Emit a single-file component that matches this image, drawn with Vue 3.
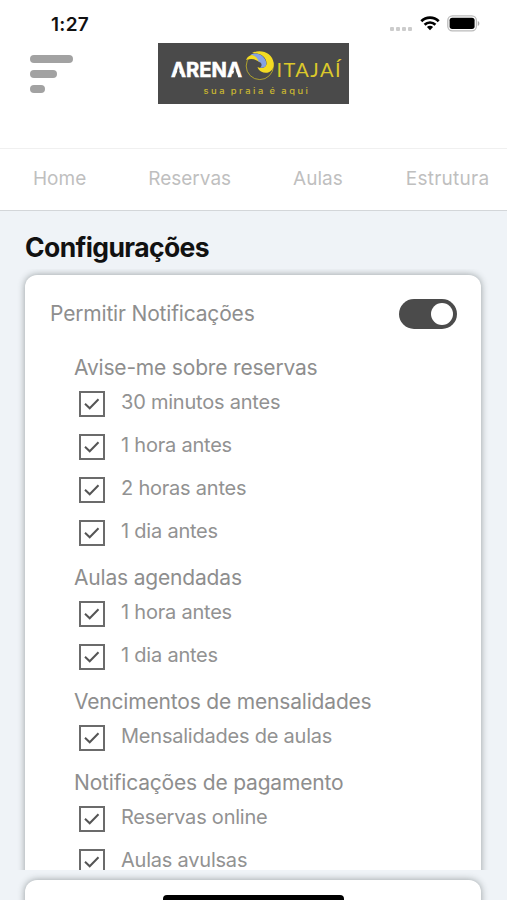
<script setup>
import { ref } from 'vue'

const tabs = ['Home', 'Reservas', 'Aulas', 'Estrutura']
const allowed = ref(true)
const groups = ref([
  {
    title: 'Avise-me sobre reservas',
    options: [
      { label: '30 minutos antes', on: true },
      { label: '1 hora antes', on: true },
      { label: '2 horas antes', on: true },
      { label: '1 dia antes', on: true },
    ],
  },
  {
    title: 'Aulas agendadas',
    options: [
      { label: '1 hora antes', on: true },
      { label: '1 dia antes', on: true },
    ],
  },
  {
    title: 'Vencimentos de mensalidades',
    options: [{ label: 'Mensalidades de aulas', on: true }],
  },
  {
    title: 'Notificações de pagamento',
    options: [
      { label: 'Reservas online', on: true },
      { label: 'Aulas avulsas', on: true },
    ],
  },
])
</script>

<template>
  <div class="screen">
    <header class="header">
      <div class="status">
        <span class="time">1:27</span>
        <div class="indicators">
          <div class="dots"><i v-for="n in 4" :key="n"></i></div>
          <svg class="wifi" width="20" height="16" viewBox="0 0 20 16">
            <path d="M10 15.2 6.9 12.1a4.4 4.4 0 0 1 6.2 0z" />
            <path class="arc" d="M4.6 9.7a7.7 7.7 0 0 1 10.8 0M1.3 6.2a12.4 12.4 0 0 1 17.4 0" />
          </svg>
          <svg class="battery" width="33" height="17" viewBox="0 0 33 17">
            <rect class="shell" x="0.8" y="0.8" width="28.6" height="15" rx="4.6" />
            <rect x="2.6" y="2.7" width="25" height="11.2" rx="2.6" />
            <path class="tip" d="M30.8 6v5c2.1-.8 2.1-4.2 0-5z" />
          </svg>
        </div>
      </div>
      <div class="brand-row">
        <button class="menu" aria-label="Menu"><i></i><i></i><i></i></button>
        <svg class="logo" width="191" height="61" viewBox="0 0 191 61">
          <rect class="plate" width="191" height="61" />
          <text class="arena" x="13" y="33.5" textLength="71" lengthAdjust="spacingAndGlyphs">ARENA</text>
          <path class="notch" d="M17.200 34.500 20.2 25 23.4 34.500z M74 34.500 77.1 25 80.2 34.500z" />
          <circle class="ring" cx="101.8" cy="23" r="13.6" />
          <path class="wave" d="M88 17C90 12 96 10.500 99.500 14c1.500 1.500 2.300 3.500 2.500 5.500-3.500-3-8-4.500-14-2.500z" />
          <path class="wave" d="M94 10C103 5.500 114.500 10 115.700 20c.6 8.500-6.700 12-12.700 8.500-2-1.200-3-2.800-3.500-4.500 3.500 2 8.500 1 9-3C109 14 102 9.500 94 10z" />
          <path class="water" d="M92.500 11.500C100 8.500 107.500 13.500 108.300 20c.3 4-3.300 5.500-6.300 4.500 2.500-1.500 2-5-1.500-6C99.500 14.500 96.500 12.500 92.500 11.500z" />
          <text class="itajai" x="118.500" y="33.500" textLength="64" lengthAdjust="spacing">ITAJAÍ</text>
          <text class="tagline" x="45.500" y="51" textLength="107" lengthAdjust="spacingAndGlyphs">sua praia é aqui</text>
        </svg>
      </div>
    </header>

    <nav class="tabs">
      <a v-for="tab in tabs" :key="tab">{{ tab }}</a>
    </nav>

    <main class="content">
      <h1>Configurações</h1>
      <div class="scroller">
        <section class="card">
          <div class="allow">
            <span>Permitir Notificações</span>
            <button class="switch" :class="{ on: allowed }" aria-label="Permitir Notificações" @click="allowed = !allowed"><i></i></button>
          </div>
          <div v-for="group in groups" :key="group.title" class="group">
            <h2>{{ group.title }}</h2>
            <div v-for="option in group.options" :key="option.label" class="option" @click="option.on = !option.on">
              <span class="box">
                <svg v-if="option.on" width="16" height="14" viewBox="0 0 16 14"><path d="M1 6.800 5.700 11.300 14.500 2.200" /></svg>
              </span>
              <span class="label">{{ option.label }}</span>
            </div>
          </div>
        </section>
      </div>
      <section class="card next"><div class="home-bar"></div></section>
    </main>
  </div>
</template>

<style>
body { background: #fff; }
</style>

<style scoped>
.screen {
  width: 507px;
  height: 900px;
  overflow: hidden;
  display: flex;
  flex-direction: column;
  font-family: Inter, "Liberation Sans", sans-serif;
  background: #fff;
}
button { border: 0; padding: 0; background: none; }
.header { height: 148px; flex: none; }
.status {
  height: 43px;
  display: flex;
  justify-content: space-between;
  padding: 0 27px 0 51px;
}
.time { font-size: 19px; font-weight: 600; line-height: 49px; letter-spacing: 0.3px; color: #111; }
.indicators { display: flex; align-items: flex-start; padding-top: 15px; }
.dots { display: flex; gap: 2px; padding-top: 12px; }
.dots i { width: 4px; height: 4px; border-radius: 1px; background: #ccc; }
.wifi { margin-left: 8px; }
.wifi .arc { fill: none; stroke: #000; stroke-width: 2.700; }
.battery { margin-left: 7px; }
.shell { fill: #fff; stroke: #bbb; stroke-width: 1.300; }
.tip { fill: #aaa; }
.brand-row { display: flex; padding-left: 30px; }
.menu { width: 43px; margin-right: 85px; padding-top: 12px; display: flex; flex-direction: column; gap: 7px; }
.menu i { height: 8px; border-radius: 4px; background: #a2a2a2; width: 43px; }
.menu i:nth-child(2) { width: 27px; }
.menu i:nth-child(3) { width: 15px; }
.plate { fill: #4a4a4a; }
.arena { font: 700 19.500px Inter, sans-serif; fill: #fff; stroke: #fff; stroke-width: 0.500; }
.notch { fill: #4a4a4a; }
.ring { fill: none; stroke: #b9aa2b; stroke-width: 0.900; }
.wave { fill: #f4dc23; }
.water { fill: #86a2e3; }
.itajai { font: 400 20px Lato, sans-serif; fill: #dcc82b; }
.tagline { font: 500 7.500px Inter, sans-serif; letter-spacing: 2px; word-spacing: -1px; fill: #c9b730; }

.tabs {
  height: 61px;
  flex: none;
  display: flex;
  gap: 62px;
  padding-left: 33px;
  border-top: 1px solid #f0f0f0;
  border-bottom: 1px solid #d3d6d9;
}
.tabs a { font-size: 19px; line-height: 59px; color: #bfbfbf; white-space: nowrap; }
.tabs a:last-child { padding-left: 1px; letter-spacing: 0.250px; }

.content { flex: 1; min-height: 0; background: #eff3f7; display: flex; flex-direction: column; }
h1 { margin: 0; padding-left: 25px; height: 58px; line-height: 72px; font-size: 26.500px; font-weight: 700; letter-spacing: -0.600px; color: #111; }
.scroller { height: 601px; flex: none; box-sizing: border-box; overflow: hidden; padding: 6px 26px 0 25px; }
.card { background: #fff; border-radius: 12px; box-shadow: 0 0 7px rgba(40, 50, 50, 0.450); }
.scroller .card { height: 700px; }
.allow { height: 76px; padding: 0 24px 0 25px; display: flex; align-items: center; justify-content: space-between; font-size: 21px; letter-spacing: -0.170px; color: #8e8e8e; }
.switch { width: 58px; height: 30px; margin-top: 2px; padding: 4px; border-radius: 15px; background: #aaa; display: flex; }
.switch.on { background: #4b4b4b; justify-content: flex-end; }
.switch i { width: 22px; height: 22px; border-radius: 50%; background: #fff; }
.group { padding: 0 0 7px 49px; }
h2 { margin: 0; height: 31px; font-size: 21px; line-height: 33px; font-weight: 400; letter-spacing: -0.180px; color: #8e8e8e; }
.option { height: 43px; padding-left: 5px; display: flex; align-items: center; gap: 16px; }
.box { width: 26px; height: 26px; box-sizing: border-box; border: 2px solid #6b6b6b; display: flex; align-items: center; justify-content: center; }
.box path { fill: none; stroke: #555; stroke-width: 2; }
.label { font-size: 20px; line-height: 24px; padding-bottom: 4px; letter-spacing: -0.220px; color: #929292; }
.next { height: 40px; flex: none; margin: 10px 26px 0 25px; display: flex; justify-content: center; align-items: flex-start; padding-top: 15px; box-sizing: border-box; }
.home-bar { width: 181px; height: 8px; border-radius: 4px; background: #000; }
</style>
